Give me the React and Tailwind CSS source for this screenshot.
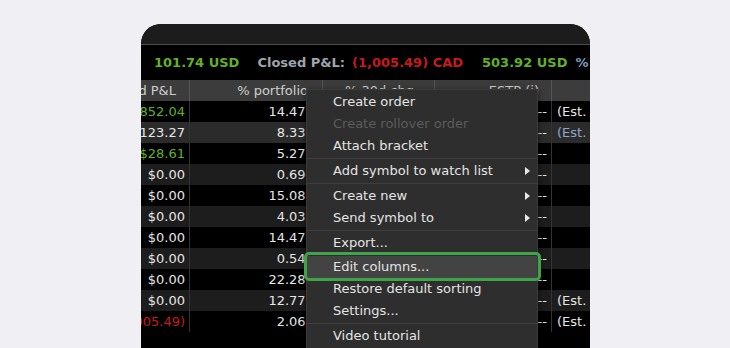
import React from "react";

const rows = [
  { pnl: "$852.04", pc: "green", pct: "14.47", est: "(Est.", bg: "bg-black" },
  { pnl: "$123.27", pc: "white", pct: "8.33", est: "(Est.", bg: "bg-[#2b2b2b]", sel: true },
  { pnl: "$28.61", pc: "green", pct: "5.27", est: "", bg: "bg-black" },
  { pnl: "$0.00", pc: "white", pct: "0.69", est: "", bg: "bg-[#1d1d1d]" },
  { pnl: "$0.00", pc: "white", pct: "15.08", est: "", bg: "bg-black" },
  { pnl: "$0.00", pc: "white", pct: "4.03", est: "", bg: "bg-[#1d1d1d]" },
  { pnl: "$0.00", pc: "white", pct: "14.47", est: "", bg: "bg-black" },
  { pnl: "$0.00", pc: "white", pct: "0.54", est: "", bg: "bg-[#1d1d1d]" },
  { pnl: "$0.00", pc: "white", pct: "22.28", est: "", bg: "bg-black" },
  { pnl: "$0.00", pc: "white", pct: "12.77", est: "(Est.", bg: "bg-[#1d1d1d]" },
  { pnl: "($1,005.49)", pc: "red", pct: "2.06", est: "(Est.", bg: "bg-black" },
];

const colorOf = (c) =>
  c === "green" ? "text-[#62b224]" : c === "red" ? "text-[#c81a1a]" : "text-[#e6e6e6]";

function Arrow() {
  return (
    <svg width="5" height="8" viewBox="0 0 5 8" className="absolute right-[7px] top-[7px]">
      <path d="M0 0 L5 4 L0 8 Z" fill="#e8e8e8" />
    </svg>
  );
}

function Item({ children, disabled, arrow }) {
  return (
    <div
      className={`relative h-[22px] leading-[22px] pl-[26px] ${
        disabled ? "text-[#5c5c5c]" : "text-[#e4e4e4]"
      }`}
    >
      {children}
      {arrow && <Arrow />}
    </div>
  );
}

function Sep() {
  return (
    <div className="h-[3px] flex items-center">
      <div className="h-px w-full bg-[#3e3e3e]" />
    </div>
  );
}

export default function App() {
  return (
    <div
      className="w-[730px] h-[348px] bg-[#f0f0f4] overflow-hidden pl-[141px] pt-[24px]"
      style={{ fontFamily: '"DejaVu Sans", Verdana, sans-serif' }}
    >
      <div className="relative w-[449px] h-[324px] rounded-t-[20px] bg-black overflow-hidden text-[13px]">
        {/* title bar */}
        <div className="h-[21px] bg-[#1c1c1c] border-b border-[#4c4c4c]" />
        {/* summary bar */}
        <div className="h-[35px] bg-black flex items-center pl-[13px] font-bold whitespace-nowrap">
          <span className="text-[#62b224]">101.74 USD</span>
          <span className="ml-[18px] text-[#9ea5ad]">Closed P&amp;L:</span>
          <span className="ml-[7px] text-[#c81a1a]">(1,005.49) CAD</span>
          <span className="ml-[19px] text-[#62b224]">503.92 USD</span>
          <span className="ml-[8px] text-[#7c9cc4]">%</span>
        </div>
        {/* header row */}
        <div className="h-[21px] bg-[#3c3c3c] flex text-[#cfcfcf] leading-[21px] whitespace-nowrap">
          <div className="w-[49px] shrink-0 overflow-hidden flex justify-end pr-[13px] border-r border-[#555]">
            <span className="shrink-0">Unrealized P&amp;L</span>
          </div>
          <div className="w-[133px] shrink-0 text-right pr-[14px] border-r border-[#555]">% portfolio</div>
          <div className="w-[112px] shrink-0 text-right pr-[20px] border-r border-[#555]">% 30d chg</div>
          <div className="w-[117px] shrink-0 text-right pr-[12px] border-r border-[#555]">ESTP (i)</div>
          <div className="flex-1" />
        </div>
        {/* data rows */}
        {rows.map((r, i) => (
          <div key={i} className={`h-[21px] flex leading-[21px] whitespace-nowrap ${r.bg}`}>
            <div className="w-[49px] shrink-0 overflow-hidden flex justify-end pr-[4px] border-r border-[#333]">
              <span className={`shrink-0 ${colorOf(r.pc)}`}>{r.pnl}</span>
            </div>
            <div className="w-[133px] shrink-0 text-right pr-[5px] text-[#e6e6e6]">{r.pct}%</div>
            <div className="w-[112px] shrink-0 text-right pr-[6px] text-[#e6e6e6]">--</div>
            <div className="w-[117px] shrink-0 text-right pr-[4px] text-[#e6e6e6] border-r border-[#333]">--</div>
            <div className={`flex-1 pl-[5px] ${r.sel ? "text-[#8fa8c8]" : "text-[#e6e6e6]"}`}>{r.est}</div>
          </div>
        ))}

        {/* context menu */}
        <div className="absolute left-[165px] top-[65px] w-[232px] h-[270px] bg-[#2e2e2e] border border-[#3a3a3a] shadow-[0_2px_6px_rgba(0,0,0,0.6)] pt-[1px] whitespace-nowrap">
          <Item>Create order</Item>
          <Item disabled>Create rollover order</Item>
          <Item>Attach bracket</Item>
          <Sep />
          <Item arrow>Add symbol to watch list</Item>
          <Sep />
          <Item arrow>Create new</Item>
          <Item arrow>Send symbol to</Item>
          <Sep />
          <Item>Export...</Item>
          <div className="h-[2px]" />
          <div className="relative h-[22px] leading-[22px] pl-[26px] text-[#e4e4e4] bg-[#434343]">
            Edit columns...
          </div>
          <Item>Restore default sorting</Item>
          <Item>Settings...</Item>
          <Sep />
          <Item>Video tutorial</Item>
        </div>
        {/* highlight outline */}
        <div className="absolute left-[163px] top-[228px] w-[237px] h-[29px] rounded-[5px] border-[3px] border-[#3fa447]" />
      </div>
    </div>
  );
}
